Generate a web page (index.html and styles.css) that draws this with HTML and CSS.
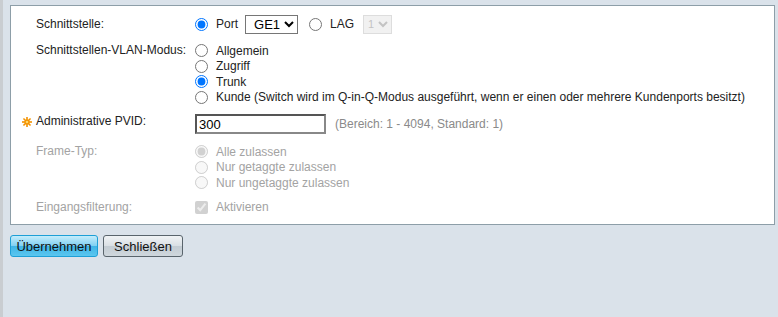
FILE: index.html
```html
<!DOCTYPE html>
<html lang="de">
<head>
    <meta charset="UTF-8">
    <title>Schnittstelleneinstellungen bearbeiten</title>
    <link rel="stylesheet" href="styles.css">
</head>
<body>
    <div class="page">
        <form class="panel">
            <div class="row first">
                <div class="label">Schnittstelle:</div>
                <div class="field inline">
                    <label class="opt"><input type="radio" name="iface" checked> Port</label>
                    <select class="sel">
                        <option>GE1</option>
                    </select>
                    <label class="opt lag"><input type="radio" name="iface"> LAG</label>
                    <select class="sel small" disabled>
                        <option>1</option>
                    </select>
                </div>
            </div>

            <div class="row">
                <div class="label">Schnittstellen-VLAN-Modus:</div>
                <div class="field">
                    <label class="line"><input type="radio" name="mode"> Allgemein</label>
                    <label class="line"><input type="radio" name="mode"> Zugriff</label>
                    <label class="line"><input type="radio" name="mode" checked> Trunk</label>
                    <label class="line"><input type="radio" name="mode"> Kunde (Switch wird im Q-in-Q-Modus ausgeführt, wenn er einen oder mehrere Kundenports besitzt)</label>
                </div>
            </div>

            <div class="row pvid">
                <div class="label required">
                    <svg class="star" width="10" height="10" viewBox="0 0 10 10">
                        <g fill="#f39200">
                            <circle cx="5" cy="5" r="2.6"/>
                            <rect x="4.2" y="0" width="1.6" height="10"/>
                            <rect x="0" y="4.2" width="10" height="1.6"/>
                            <rect x="4.2" y="0" width="1.6" height="10" transform="rotate(45 5 5)"/>
                            <rect x="4.2" y="0" width="1.6" height="10" transform="rotate(-45 5 5)"/>
                        </g>
                        <circle cx="5" cy="5" r="1.3" fill="#ffd76a"/>
                    </svg>
                    Administrative PVID:
                </div>
                <div class="field inline">
                    <input class="text" type="text" value="300">
                    <span class="hint">(Bereich: 1 - 4094, Standard: 1)</span>
                </div>
            </div>

            <div class="row disabled">
                <div class="label">Frame-Typ:</div>
                <div class="field">
                    <label class="line"><input type="radio" name="frame" checked disabled> Alle zulassen</label>
                    <label class="line"><input type="radio" name="frame" disabled> Nur getaggte zulassen</label>
                    <label class="line"><input type="radio" name="frame" disabled> Nur ungetaggte zulassen</label>
                </div>
            </div>

            <div class="row disabled">
                <div class="label">Eingangsfilterung:</div>
                <div class="field">
                    <label class="line"><input type="checkbox" checked disabled> Aktivieren</label>
                </div>
            </div>
        </form>

        <div class="buttons">
            <button class="btn apply" type="button">Übernehmen</button>
            <button class="btn close" type="button">Schließen</button>
        </div>
    </div>
</body>
</html>
```

FILE: styles.css
```css
* {
    box-sizing: border-box;
}

html, body {
    margin: 0;
    padding: 0;
    height: 100%;
}

body {
    font-family: 'Liberation Sans', Arial, sans-serif;
    font-size: 12px;
    color: #222;
    background-color: #dae2ea;
}

.page {
    min-height: 100%;
    border-left: 3px solid #c9cdd1;
    padding: 5px 3px 0 7px;
}

.panel {
    background: #fff;
    border: 1px solid #8d9ea8;
    padding: 8px 0 9px 25px;
}

.row {
    display: grid;
    grid-template-columns: 159px 1fr;
    margin-top: 9px;
}

.row.first {
    margin-top: 0;
}

.label {
    line-height: 15px;
    white-space: nowrap;
}

.row.first .label {
    line-height: 20px;
}

.field.inline {
    display: flex;
    align-items: center;
    height: 20px;
}

.opt, .line {
    display: flex;
    align-items: center;
    white-space: nowrap;
}

.line {
    height: 15.5px;
}

input[type="radio"], input[type="checkbox"] {
    width: 13px;
    height: 13px;
    margin: 0 8px 0 0;
}

.sel {
    font-family: 'Liberation Sans', Arial, sans-serif;
    font-size: 13px;
    height: 19px;
    margin-left: 7px;
    padding: 0 0 0 4px;
    border: 1px solid #767676;
    border-radius: 0;
    background: #fff;
    color: #000;
    width: 53px;
}

.sel.small {
    width: 29px;
    margin-left: 9px;
    padding: 0;
    font-size: 11px;
    background: #ececec;
    border-color: #d0d0d0;
    color: #aaa;
}

.lag {
    margin-left: 11px;
}

.required {
    margin-left: -14px;
    display: flex;
    align-items: center;
    gap: 4px;
    height: 15px;
}

.star {
    display: block;
}

.text {
    width: 131px;
    height: 20px;
    padding: 0 2px;
    font-family: 'Liberation Sans', Arial, sans-serif;
    font-size: 13px;
    color: #000;
    border: 2px solid #555;
    border-right-color: #888;
    border-bottom-color: #888;
}

.hint {
    margin-left: 9px;
    color: #8a8a8a;
}

.pvid {
    margin-top: 9px;
}

.row.disabled {
    color: #a3a3a3;
    margin-top: 10px;
}

.row.disabled:last-child {
    margin-top: 9px;
}

.buttons {
    display: flex;
    gap: 5px;
    margin-top: 10px;
}

.btn {
    font-family: 'Liberation Sans', Arial, sans-serif;
    font-size: 13px;
    height: 22px;
    padding: 0;
    border-radius: 3px;
    color: #111;
    cursor: pointer;
}

.apply {
    width: 88px;
    border: 1px solid #1d9fd6;
    background: linear-gradient(#c4ecfb, #7fd0f2 50%, #3fb4e6 51%, #5ac6ef);
}

.close {
    width: 80px;
    border: 1px solid #59646c;
    background: linear-gradient(#f0f3f5, #d9dfe4 50%, #c3ccd3 51%, #cfd7dd);
}
```
